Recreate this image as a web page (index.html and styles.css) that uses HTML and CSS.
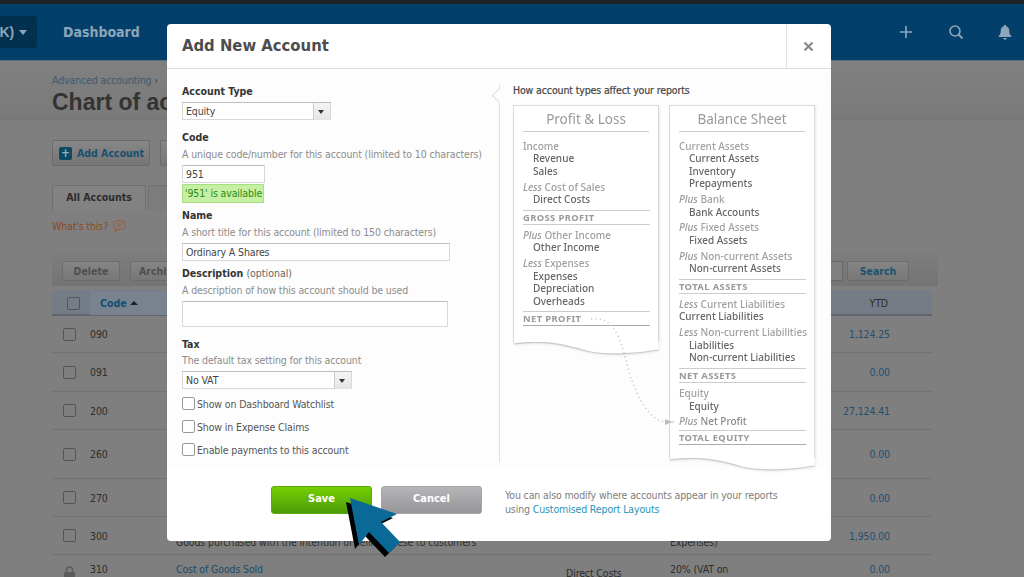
FILE: index.html
```html
<!DOCTYPE html>
<html lang="en">
<head>
<meta charset="utf-8">
<title>Add New Account</title>
<link rel="stylesheet" href="styles.css">
</head>
<body>
<div class="page">
  <div class="strip"></div>
  <header class="topbar">
    <div class="org">K) <span class="caret"></span></div>
    <div class="nav-item">Dashboard</div>
    <div class="top-icons">
      <svg width="16" height="16" viewBox="0 0 16 16"><path d="M8 2v12M2 8h12" stroke="#8ea6b9" stroke-width="1.6"/></svg>
      <svg width="16" height="16" viewBox="0 0 16 16"><circle cx="7" cy="7" r="5" fill="none" stroke="#8ea6b9" stroke-width="1.6"/><path d="M10.5 10.5l4 4" stroke="#8ea6b9" stroke-width="1.8"/></svg>
      <svg width="14" height="16" viewBox="0 0 14 16"><path d="M7 1c.8 0 1.2.5 1.3 1.2C10.500 2.900 11.300 4.800 11.300 7c0 2.500.7 3.800 2 5v1H.7v-1c1.300-1.200 2-2.500 2-5 0-2.200.8-4.100 3-4.800C5.800 1.500 6.200 1 7 1zM5.300 14h3.400c0 1-.7 1.700-1.700 1.700S5.300 15 5.300 14z" fill="#8ea6b9"/></svg>
    </div>
  </header>
  <section class="page-head">
    <div class="crumb">Advanced accounting <span class="crumb-sep">›</span></div>
    <h1>Chart of accounts</h1>
  </section>
  <main class="content">
    <div class="actions">
      <div class="btn btn-add"><span class="plus-ico">+</span>Add Account</div>
      <div class="btn btn-next">Import</div>
    </div>
    <div class="tabs">
      <div class="tab tab-on">All Accounts</div>
      <div class="tab">Assets</div>
    </div>
    <div class="whats">What's this? <svg width="15" height="14" viewBox="0 0 15 14"><path d="M7.500 1.500c3.300 0 5.800 2 5.800 4.600S10.800 10.700 7.500 10.700c-.7 0-1.300-.1-1.900-.2L3 12.700l.4-3.100C2.300 8.700 1.700 7.500 1.700 6.100 1.700 3.500 4.200 1.500 7.500 1.500z" fill="none" stroke="#9c5f3c" stroke-width="1.200"/><path d="M5 5h5M5 7.400h4" stroke="#9c5f3c"/></svg></div>
    <div class="toolbar">
      <div class="btn-sm">Delete</div>
      <div class="btn-sm">Archive</div>
      <div class="search-wrap"><div class="search-input"></div><div class="btn-sm btn-search">Search</div></div>
    </div>
    <div class="table">
      <div class="tr thead">
        <div class="cell-check head-check"><span class="cb"></span></div>
        <div class="head-code">Code <span class="sort"></span></div>
        <div></div><div></div><div></div>
        <div class="ytd ytd-head">YTD</div>
      </div>
      <div class="tr h37"><div class="cell-check"><span class="cb"></span></div><div>090</div><div></div><div></div><div></div><div class="ytd">1,124.25</div></div>
      <div class="tr h39"><div class="cell-check"><span class="cb"></span></div><div>091</div><div></div><div></div><div></div><div class="ytd">0.00</div></div>
      <div class="tr h38"><div class="cell-check"><span class="cb"></span></div><div>200</div><div></div><div></div><div></div><div class="ytd">27,124.41</div></div>
      <div class="tr h49"><div class="cell-check"><span class="cb"></span></div><div>260</div><div></div><div></div><div></div><div class="ytd">0.00</div></div>
      <div class="tr h38"><div class="cell-check"><span class="cb"></span></div><div>270</div><div></div><div></div><div></div><div class="ytd">0.00</div></div>
      <div class="tr h38"><div class="cell-check"><span class="cb"></span></div><div>300</div>
        <div class="cell-two"><span class="link">Purchases</span><span>Goods purchased with the intention of selling these to customers</span></div>
        <div></div><div class="cell-two"><span>20% (VAT on</span><span>Expenses)</span></div><div class="ytd">1,950.00</div></div>
      <div class="tr h38 tr-top"><div class="cell-check lock"><svg width="13" height="14" viewBox="0 0 13 14"><path d="M3.500 6V4a3 3 0 0 1 6 0v2" fill="none" stroke="#5c5c5c" stroke-width="1.500"/><rect x="1" y="6" width="11" height="7" rx="1" fill="#5c5c5c"/></svg></div><div>310</div>
        <div class="cell-two"><span class="link">Cost of Goods Sold</span><span>Cost of goods sold by the business</span></div>
        <div class="cell-low">Direct Costs</div><div class="cell-two"><span>20% (VAT on</span><span>Expenses)</span></div><div class="ytd">0.00</div></div>
    </div>
  </main>

  <div class="modal">
    <div class="modal-head">
      <h2>Add New Account</h2>
      <div class="close"><svg width="11" height="11" viewBox="0 0 11 11"><path d="M1.500 1.500l8 8M9.500 1.500l-8 8" stroke="#8a8a8a" stroke-width="2.200"/></svg></div>
    </div>
    <div class="modal-body">
      <form class="form">
        <div class="field">
          <div class="label">Account Type</div>
          <div class="select w149"><span>Equity</span><i class="sel-btn"></i></div>
        </div>
        <div class="field">
          <div class="label">Code</div>
          <div class="hint">A unique code/number for this account (limited to 10 characters)</div>
          <div class="input w83">951</div>
          <div class="ok">'951' is available</div>
        </div>
        <div class="field tight">
          <div class="label">Name</div>
          <div class="hint">A short title for this account (limited to 150 characters)</div>
          <div class="input w268">Ordinary A Shares</div>
        </div>
        <div class="field tight">
          <div class="label">Description <span class="opt">(optional)</span></div>
          <div class="hint">A description of how this account should be used</div>
          <div class="input w266 tall"></div>
        </div>
        <div class="field field-tax">
          <div class="label">Tax</div>
          <div class="hint">The default tax setting for this account</div>
          <div class="select w170"><span>No VAT</span><i class="sel-btn"></i></div>
        </div>
        <div class="checks">
          <div class="check"><span class="cb-light"></span>Show on Dashboard Watchlist</div>
          <div class="check"><span class="cb-light"></span>Show in Expense Claims</div>
          <div class="check"><span class="cb-light"></span>Enable payments to this account</div>
        </div>
      </form>
      <aside class="guide">
        <span class="notch"></span>
        <h3>How account types affect your reports</h3>
        <div class="sheets">
          <div class="sheet">
            <div class="sheet-inner sheet-short">
              <h4>Profit &amp; Loss</h4>
              <div class="grp"><p>Income</p><p class="in">Revenue</p><p class="in">Sales</p></div>
              <div class="grp"><p><em>Less</em> Cost of Sales</p><p class="in">Direct Costs</p></div>
              <div class="total">GROSS PROFIT</div>
              <div class="grp"><p><em>Plus</em> Other Income</p><p class="in">Other Income</p></div>
              <div class="grp"><p><em>Less</em> Expenses</p><p class="in">Expenses</p><p class="in">Depreciation</p><p class="in">Overheads</p></div>
              <div class="total total-end">NET PROFIT</div>
            </div>
            <svg class="wave" width="146" height="14" viewBox="0 0 148 14" preserveAspectRatio="none"><path d="M0.500 2C30 -2 50 2 74 9 95 14 125 12 147.500 8V0H0.500z" fill="#fff"/><path d="M0.500 2C30 -2 50 2 74 9 95 14 125 12 147.500 8" fill="none" stroke="#c9c9c9" stroke-width="1.200"/></svg>
          </div>
          <div class="sheet">
            <div class="sheet-inner">
              <h4>Balance Sheet</h4>
              <div class="grp"><p>Current Assets</p><p class="in">Current Assets</p><p class="in">Inventory</p><p class="in">Prepayments</p></div>
              <div class="grp"><p><em>Plus</em> Bank</p><p class="in">Bank Accounts</p></div>
              <div class="grp"><p><em>Plus</em> Fixed Assets</p><p class="in">Fixed Assets</p></div>
              <div class="grp"><p><em>Plus</em> Non-current Assets</p><p class="in">Non-current Assets</p></div>
              <div class="total">TOTAL ASSETS</div>
              <div class="grp"><p><em>Less</em> Current Liabilities</p><p class="dark">Current Liabilities</p></div>
              <div class="grp"><p><em>Less</em> Non-current Liabilities</p><p class="in">Liabilities</p><p class="in">Non-current Liabilities</p></div>
              <div class="total">NET ASSETS</div>
              <div class="grp"><p>Equity</p><p class="in">Equity</p></div>
              <div class="grp"><p><em>Plus</em> <span class="strong-line">Net Profit</span></p></div>
              <div class="total total-end total-tight">TOTAL EQUITY</div>
            </div>
            <svg class="wave" width="146" height="14" viewBox="0 0 148 14" preserveAspectRatio="none"><path d="M0.500 2C30 -2 50 2 74 9 95 14 125 12 147.500 8V0H0.500z" fill="#fff"/><path d="M0.500 2C30 -2 50 2 74 9 95 14 125 12 147.500 8" fill="none" stroke="#c9c9c9" stroke-width="1.200"/></svg>
          </div>
        </div>
        <svg class="flow" width="90" height="112" viewBox="0 0 90 112"><path d="M0 1C14 0 20 4 27 18 36 38 36 54 44 70 52 90 62 102 74 104" fill="none" stroke="#c4c4c4" stroke-width="1.300" stroke-dasharray="1.300 3"/><path d="M74 101l7 3-7 3z" fill="#bdbdbd"/><path d="M78 104h5" stroke="#bdbdbd"/></svg>
      </aside>
    </div>
    <div class="modal-foot">
      <div class="foot-btns">
        <div class="cta save">Save</div>
        <div class="cta cancel">Cancel</div>
      </div>
      <div class="foot-note">You can also modify where accounts appear in your reports<br>using <a class="note-link">Customised Report Layouts</a></div>
    </div>
  </div>

  <svg class="pointer" width="60" height="64" viewBox="0 0 60 64">
    <path d="M3 4L50 20 34 28 53 48 42 59 22 38 12 51z" fill="#000" transform="translate(-2 2)"/>
    <path d="M5 2L52 18 36 26 55 46 44 57 24 36 14 49z" fill="#0b6998"/>
  </svg>
</div>
</body>
</html>
```
FILE: styles.css
```css
* { box-sizing: border-box; }
html, body { margin: 0; padding: 0; }
body { font-family: "DejaVu Sans Condensed", "DejaVu Sans", sans-serif; font-size: 10.5px; letter-spacing: -.13px; color: #444; }
.page { position: relative; width: 1024px; height: 577px; overflow: hidden; background: #7f7f7f; }

.strip { height: 4px; background: #1f2328; }
.topbar { height: 57px; background: #033f6b; display: flex; align-items: center; border-bottom: 1px solid #566f80; }
.org { width: 37px; height: 32px; background: #02304f; border-radius: 0 3px 3px 0; color: #8ea6b9; font: 700 14px "Liberation Sans", sans-serif; display: flex; align-items: center; gap: 5px; justify-content: flex-end; padding-right: 10px; }
.caret { border: 4px solid transparent; border-top: 5px solid #8ea6b9; border-bottom: 0; }
.nav-item { margin-left: 26px; color: #8ea6b9; font: 700 14px "DejaVu Sans Condensed", sans-serif; letter-spacing: 0; }
.top-icons { margin-left: auto; display: flex; align-items: center; gap: 34px; padding-right: 12px; }

.page-head { height: 59px; padding: 13px 52px 0; background: linear-gradient(#808080, #7a7a7a); border-bottom: 1px solid #767676; }
.crumb { color: #3c5a70; font-size: 10.5px; line-height: 13px; }
.crumb-sep { color: #3a3a3a; }
h1 { margin: 2px 0 0; font: 700 23px/27px "Liberation Sans", sans-serif; color: #333; white-space: nowrap; letter-spacing: 0; }

.content { padding: 20px 0 0 52px; }
.actions { display: flex; gap: 10px; height: 26px; }
.btn { height: 26px; border: 1px solid #6b6b6b; border-radius: 2px; background: linear-gradient(#878787, #767676); display: flex; align-items: center; font-weight: 700; font-size: 10.5px; color: #184f70; letter-spacing: 0; }
.btn-add { width: 98px; padding-left: 6px; gap: 5px; }
.plus-ico { width: 13px; height: 13px; background: #0d4a63; color: #8fb0bd; border-radius: 2px; font-size: 12px; line-height: 12px; text-align: center; }
.btn-next { width: 60px; padding-left: 8px; }
.tabs { display: flex; gap: 2px; margin-top: 19px; height: 25px; }
.tab { width: 94px; border: 1px solid #707070; border-bottom: 0; border-radius: 2px 2px 0 0; font-weight: 700; color: #2c2c2c; display: flex; align-items: center; justify-content: center; background: #7c7c7c; letter-spacing: 0; padding-bottom: 2px; }
.tab-on { background: #828282; }
.whats { margin-top: 9px; height: 14px; color: #8a4a20; display: flex; align-items: center; gap: 4px; font-size: 10.5px; }
.toolbar { margin-top: 21px; width: 886px; height: 32px; background: linear-gradient(#7d7d7d, #747474); padding: 7px 10px 0; display: flex; gap: 10px; }
.btn-sm { height: 20px; width: 58px; border: 1px solid #6c6c6c; border-radius: 2px; background: linear-gradient(#858585, #777); color: #4f4f4f; font-weight: 700; display: flex; align-items: center; justify-content: center; font-size: 10.5px; letter-spacing: 0; }
.search-wrap { margin-left: auto; display: flex; gap: 4px; padding-right: 19px; }
.search-input { width: 120px; height: 20px; border: 1px solid #666; background: #808080; }
.btn-search { width: 62px; color: #1a5272; }

.table { width: 880px; margin-top: 4px; }
.tr { display: grid; grid-template-columns: 38px 86px 390px 104px 110px 1fr; align-items: center; border-bottom: 1px solid #727272; color: #2d2d2d; font-size: 10.5px; }
.thead { height: 26px; background: #767c86; border-bottom: 2px solid #5f6670; position: relative; padding-top: 1px; }
.h37 { height: 37px; } .h38 { height: 38px; } .h39 { height: 39px; } .h49 { height: 49px; }
.tr-top { align-items: start; padding-top: 8px; }
.cell-check { display: flex; padding-left: 11px; }
.lock { padding-top: 3px; }
.cell-low { padding-top: 4px; }
.cb { width: 13px; height: 13px; border: 1px solid #555; border-radius: 2px; }
.head-check { padding-left: 15px; }
.head-code { color: #134f72; font-weight: 700; padding-left: 10px; display: flex; align-items: center; gap: 3px; background: #78838f; height: 24px; letter-spacing: 0; }
.sort { border: 4px solid transparent; border-bottom: 4px solid #222; border-top: 0; }
.ytd { text-align: right; padding-right: 42px; color: #234f6e; white-space: nowrap; }
.ytd-head { color: #2c2c2c; padding-right: 44px; }
.cell-two { display: flex; flex-direction: column; line-height: 12px; white-space: nowrap; }
.link { color: #1a4d6c; }

.modal { position: absolute; left: 167px; top: 24px; width: 664px; height: 517px; background: #fff; border-radius: 4px; display: flex; flex-direction: column; }
.modal-head { height: 45px; display: flex; border-bottom: 1px solid #dcdcdc; flex: none; }
.modal-head h2 { margin: 0; flex: 1; padding-left: 15px; font: 700 16.5px/43px "DejaVu Sans Condensed", sans-serif; color: #4d4d4d; letter-spacing: 0; }
.close { width: 45px; border-left: 1px solid #e0e0e0; display: flex; align-items: center; justify-content: center; padding-right: 2px; }
.modal-body { height: 401px; background: #fdfdfd; display: flex; padding: 15px 0 0 15px; flex: none; }
.form { width: 317px; flex: none; }
.field { margin-top: 10px; }
.field:first-child { margin-top: 0; }
.tight { margin-top: 5px; }
.label { font-weight: 700; color: #333; line-height: 14px; letter-spacing: 0; }
.opt { font-weight: 400; color: #666; }
.hint { margin-top: 3px; color: #8c8c8c; line-height: 14px; white-space: nowrap; }
.field-tax .hint { margin-top: 2px; }
.select, .input { margin-top: 4px; height: 18px; border: 1px solid #d8d8d8; border-top-color: #bdbdbd; background: #fff; color: #444; padding-left: 3px; display: flex; align-items: center; }
.select { padding-right: 0; justify-content: space-between; }
.sel-btn { width: 17px; height: 17px; background: linear-gradient(#f5f5f5, #e4e4e4); border-left: 1px solid #ccc; position: relative; display: block; }
.sel-btn::after { content: ""; position: absolute; left: 4px; top: 7px; border: 3.500px solid transparent; border-top: 4px solid #333; border-bottom: 0; }
.w149 { width: 149px; } .w170 { width: 170px; } .w83 { width: 83px; } .w268 { width: 268px; } .w266 { width: 266px; }
.tall { height: 26px; }
.ok { margin-top: 1px; width: 82px; height: 19px; background: #c5f0a4; border: 1px solid #a7e080; color: #2f8a12; line-height: 17px; padding-left: 2px; white-space: nowrap; }
.checks { margin-top: 3px; display: flex; flex-direction: column; }
.check { height: 23px; display: flex; align-items: center; gap: 2px; color: #555; }
.cb-light { width: 13px; height: 13px; border: 1px solid #999; border-radius: 2px; background: #fff; }

.guide { position: relative; width: 317px; height: 377px; margin-top: 1px; border-left: 1px solid #dfdfdf; padding-left: 13px; }
.notch { position: absolute; left: -6px; top: 5px; width: 11px; height: 11px; background: #fdfdfd; border-left: 1px solid #dfdfdf; border-bottom: 1px solid #dfdfdf; transform: rotate(45deg); }
.guide h3 { margin: -1px 0 0; font: 400 10.5px/12px "DejaVu Sans Condensed", sans-serif; color: #444; -webkit-text-stroke: .2px #444; }
.sheets { display: flex; gap: 10px; align-items: flex-start; margin-top: 9px; }
.sheet { width: 146px; filter: drop-shadow(1px 1px 1px rgba(0,0,0,.08)); font-family: "Noto Sans", sans-serif; letter-spacing: 0; }
.sheet-inner { background: #fff; border: 1px solid #d9d9d9; border-bottom: 0; padding: 0 8px 13px 9px; }
.sheet-short { padding-bottom: 16px; }
.wave { display: block; width: 146px; height: 14px; }
.sheet h4 { margin: 0 1px 0 0; height: 26px; font: 400 13.5px/27px "Noto Sans", sans-serif; text-align: center; color: #999; border-bottom: 1px solid #ccc; }
.grp { margin-top: 3.5px; }
.sheet-inner h4 + .grp { margin-top: 8px; }
.grp p { margin: 0; font-size: 10px; font-weight: 500; line-height: 12.4px; color: #a0a0a0; white-space: nowrap; }
.grp p.in { padding-left: 10px; color: #666; }
.grp p.dark { color: #666; }
.strong-line { color: #8a8a8a; }
.grp em { color: #999; }
.total { margin-top: 4px; height: 15px; border-top: 1px solid #ccc; border-bottom: 1px solid #ccc; font-size: 9.4px; font-weight: 700; letter-spacing: .4px; line-height: 14px; color: #999; white-space: nowrap; }
.total-end { border-bottom-color: #aaa; }
.total-tight { margin-top: 2px; }
.total + .grp { margin-top: 4.5px; }
.flow { position: absolute; left: 91px; top: 233px; }

.modal-foot { display: flex; flex: 1; padding-top: 16px; }
.foot-btns { display: flex; gap: 9px; margin-left: 104px; }
.cta { width: 101px; height: 28px; padding-bottom: 3px; border-radius: 3px; color: #fff; font-weight: 700; font-size: 11px; display: flex; align-items: center; justify-content: center; letter-spacing: 0; }
.save { background: linear-gradient(#74cf00, #4c9c0a); border: 1px solid #5da80b; }
.cancel { background: linear-gradient(#b5b5b8, #96969a); border: 1px solid #a5a5a8; }
.foot-note { margin-left: 23px; margin-top: 2px; line-height: 14px; color: #7d7d7d; white-space: nowrap; }
.note-link { color: #2a93b8; }

.pointer { position: absolute; left: 345px; top: 496px; }
```
